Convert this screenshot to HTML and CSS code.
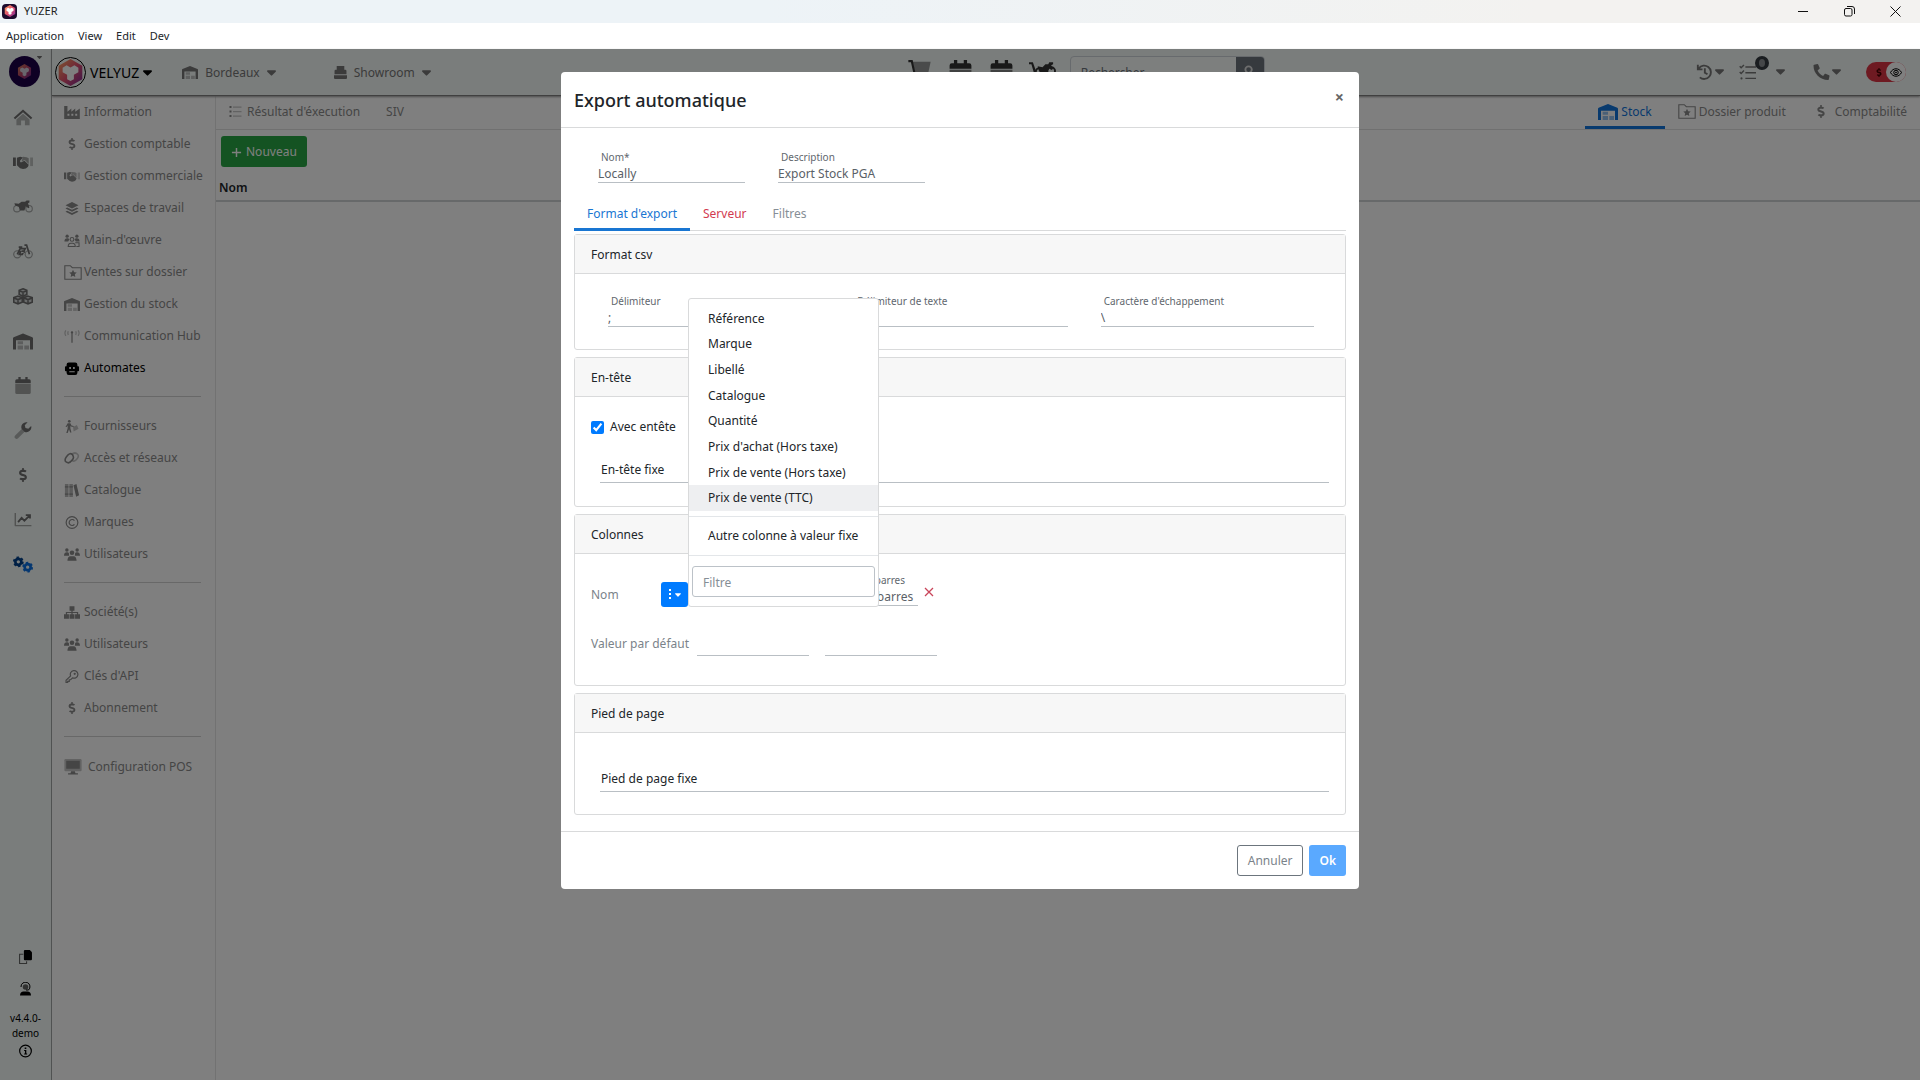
FILE: index.html
```
<!DOCTYPE html>
<html lang="fr">

<head>
    <meta charset="UTF-8">
    <meta name="viewport" content="width=device-width, initial-scale=1.0">
    <title>YUZER</title>
    <link rel="stylesheet" href="styles.css">
</head>

<body>
    <!-- Icon sprite -->
    <svg class="sprite" aria-hidden="true">
        <defs>
            <linearGradient id="brand" x1="0" y1="0" x2="1" y2="1">
                <stop offset="0" stop-color="#ffa860" />
                <stop offset="0.5" stop-color="#e0506e" />
                <stop offset="1" stop-color="#7a2a9a" />
            </linearGradient>
        </defs>
        <symbol id="i-caret" viewBox="0 0 10 6"><path d="M1 0h8c.9 0 1.300 .9.700 1.500L5.700 5.600a1 1 0 0 1-1.400 0L.3 1.500C-.3.900.1 0 1 0z" /></symbol>
        <symbol id="i-hex" viewBox="0 0 24 24">
            <path fill="url(#brand)" d="M12 0l10.500 6v12L12 24 1.500 18V6z" />
            <path fill="#fff" d="M8.500 5.500l3.500 2 3.500-2 3.500 2.200v4l-4 2.300v4L12 19.500 9 18v-4l-4-2.300v-4z" />
        </symbol>
        <symbol id="i-home" viewBox="0 0 24 22">
            <path opacity=".5" d="M12 6l8.500 7.500V21h-6v-6h-5v6h-6v-7.500z" />
            <path d="M12 .5l12 10.700-1.800 2L12 4.200 1.800 13.200 0 11.200z" />
        </symbol>
        <symbol id="i-handshake" viewBox="0 0 28 18">
            <path d="M0 2h4v12H0zM5.500 2.500L10 1l4 1-4.500 5 1.500 2 5-2.500 6 5.500-1 3-3 2.500-4 .5-4-1-4.500-4z" />
            <path d="M14 1l5 .5 3 1.500v8l-5.500-5.500L12 7.500z" opacity=".6" />
            <path opacity=".4" d="M24 2h4v12h-4z" />
        </symbol>
        <symbol id="i-moto" viewBox="0 0 28 17">
            <path fill="none" stroke="currentColor" stroke-width="1.500" opacity=".6" d="M10 11.500a4.500 4.500 0 1 1-9 0 4.500 4.500 0 0 1 9 0zM27 11.500a4.500 4.500 0 1 1-9 0 4.500 4.500 0 0 1 9 0z" />
            <path d="M2 4l6 .5 4-2.500h5L19 0h4v3l-2 1 2 6-1.500 1L18 8l-2 6h-6L8 9 3 7z" />
        </symbol>
        <symbol id="i-bike" viewBox="0 0 28 20">
            <path fill="none" stroke="currentColor" stroke-width="1.600" opacity=".6" d="M11 14a5 5 0 1 1-10 0 5 5 0 0 1 10 0zM27 14a5 5 0 1 1-10 0 5 5 0 0 1 10 0z" />
            <path fill="none" stroke="currentColor" stroke-width="2.400" d="M6 14l4-8h7l-4 8H9l2-5M16 1h3l4 13M8 4h5M12 9l5 2" />
        </symbol>
        <symbol id="i-cubes" viewBox="0 0 26 22">
            <g fill="none" stroke="currentColor" stroke-width="2">
                <path fill="currentColor" fill-opacity=".25" d="M13 1l5 2v5.500l-5 2-5-2V3zM6.500 10.500l5.500 2v6l-5.500 2-5.500-2v-6zM19.500 10.500l5.500 2v6l-5.500 2-5.500-2v-6z" />
                <path d="M8 3.500l5 2 5-2M13 5.500V10M1 13l5.500 2 5.500-2M6.500 15v5M14 13l5.500 2 5.500-2M19.500 15v5" />
            </g>
        </symbol>
        <symbol id="i-warehouse" viewBox="0 0 30 24">
            <path d="M15 0l14 5.500c.6.300 1 .9 1 1.500v17h-4.500V10h-21v14H0V7c0-.6.400-1.200 1-1.500z" />
            <path opacity=".45" d="M7 11.500h8V16H7zM7 18h8v6H7zM17 18h7v6h-7z" />
        </symbol>
        <symbol id="i-calendar" viewBox="0 0 20 22">
            <path d="M4 0h3v3h6V0h3v3h2a2 2 0 0 1 2 2v3H0V5a2 2 0 0 1 2-2h2z" />
            <path opacity=".6" d="M0 9h20v11a2 2 0 0 1-2 2H2a2 2 0 0 1-2-2z" />
        </symbol>
        <symbol id="i-wrench" viewBox="0 0 24 24">
            <path opacity=".5" d="M11 9l4 4L5 23a2.800 2.800 0 0 1-4-4z" />
            <path d="M23.500 5.500l-4 4-4-1-1-4 4-4a7 7 0 0 0-8.500 9l4.500 4.500a7 7 0 0 0 9-8.500z" />
        </symbol>
        <symbol id="i-dollar" viewBox="0 0 288 512"><path d="M209.200 233.400l-108-31.600C88.700 198.200 80 186.500 80 173.500c0-16.300 13.200-29.500 29.500-29.500h66.300c12.200 0 24.200 3.700 34.200 10.500 6.100 4.100 14.300 3.100 19.500-2l34.800-34c7.100-6.900 6.100-18.400-1.800-24.500C238 74.800 207.400 64.100 176 64V16c0-8.800-7.200-16-16-16h-32c-8.800 0-16 7.200-16 16v48h-2.500C45.800 64-5.400 118.700.5 183.600c4.200 46.100 39.400 83.600 83.800 96.600l102.500 30c12.500 3.700 21.200 15.300 21.200 28.300 0 16.300-13.200 29.500-29.500 29.500h-66.300C100 368 88 364.300 78 357.500c-6.100-4.100-14.300-3.100-19.500 2l-34.800 34c-7.100 6.900-6.100 18.400 1.800 24.500 24.500 19.200 55.100 29.900 86.500 30v48c0 8.800 7.200 16 16 16h32c8.800 0 16-7.200 16-16v-48.200c46.600-.9 90.300-28.600 105.700-72.700 21.500-61.600-14.600-124.800-72.500-141.700z" /></symbol>
        <symbol id="i-chart" viewBox="0 0 24 20">
            <path opacity=".6" d="M0 0h2v17h22v2H1a1 1 0 0 1-1-1z" />
            <path fill="none" stroke="currentColor" stroke-width="2.500" d="M5 13l5-6 4 4 7-7M16 3h6v5" />
        </symbol>
        <symbol id="i-cogs" viewBox="0 0 30 24">
            <circle cx="8" cy="8" r="4.500" fill="none" stroke="#00408a" stroke-width="4" />
            <circle cx="8" cy="8" r="6.800" fill="none" stroke="#00408a" stroke-width="2.600" stroke-dasharray="3.600 3.520" />
            <circle cx="22" cy="16" r="4.500" fill="none" stroke="#0a6fe0" stroke-width="4" />
            <circle cx="22" cy="16" r="6.800" fill="none" stroke="#0a6fe0" stroke-width="2.600" stroke-dasharray="3.600 3.520" />
        </symbol>
        <symbol id="i-copy" viewBox="0 0 24 26">
            <path fill="none" stroke="currentColor" stroke-width="2" opacity=".6" d="M8 8H1v17h13v-4" />
            <path d="M11 0h9l4 4v13a2 2 0 0 1-2 2H11a2 2 0 0 1-2-2V2a2 2 0 0 1 2-2z" />
        </symbol>
        <symbol id="i-support" viewBox="0 0 24 28">
            <path fill="none" stroke="currentColor" stroke-width="2" d="M3 10a9 9 0 1 1 15 6h-5" />
            <circle cx="12" cy="10" r="5.500" opacity=".6" />
            <path d="M1 27c0-5 3-8 7-8h8c4 0 7 3 7 8z" />
        </symbol>
        <symbol id="i-info" viewBox="0 0 24 24">
            <circle cx="12" cy="12" r="10.800" fill="none" stroke="currentColor" stroke-width="2.200" />
            <path d="M10.500 5.500h3v3h-3zM9.500 10h4v6.500H15V18.500H9.500v-2H11V12H9.500z" />
        </symbol>
        <symbol id="i-factory" viewBox="0 0 24 20"><path d="M0 0h5v9l6-5v5l6-5v5l7-5v16H0zM5 12v3h3v-3zm6 0v3h3v-3zm6 0v3h3v-3z" fill-rule="evenodd" /></symbol>
        <symbol id="i-layers" viewBox="0 0 24 24"><path d="M12 0l12 6-12 6L0 6zM3 10l9 4.500L21 10l3 1.800-12 6-12-6zM3 16l9 4.500L21 16l3 1.800L12 24 0 17.800z" /></symbol>
        <symbol id="i-crew" viewBox="0 0 28 24">
            <circle cx="5" cy="4" r="3" /><circle cx="23" cy="4" r="3" />
            <path d="M0 14c0-4 2-6 5-6 2 0 3 .5 4 2l-2 4zM28 14c0-4-2-6-5-6-2 0-3 .5-4 2l2 4z" />
            <g fill="none" stroke="currentColor" stroke-width="2"><circle cx="14" cy="10" r="3.500" /><path d="M7 23c0-4 2-6 5-6h3c3 0 5 2 5 6zM20 16h7v7h-5" /></g>
        </symbol>
        <symbol id="i-folder" viewBox="0 0 26 22">
            <path fill="none" stroke="currentColor" stroke-width="1.600" d="M1 1h8l3 3h13v17H1z" />
            <path d="M13 7l1.700 3.500 3.800.5-2.800 2.700.7 3.800L13 15.700l-3.400 1.800.7-3.800L7.500 11l3.800-.5z" />
        </symbol>
        <symbol id="i-antenna" viewBox="0 0 26 20">
            <path d="M11 3.500a2 2 0 1 1 4 0 2 2 0 0 1-1 1.700V20h-2V5.200a2 2 0 0 1-1-1.700z" />
            <path fill="none" stroke="currentColor" stroke-width="2" opacity=".5" d="M3 0c-2 3-2 6 0 9M23 0c2 3 2 6 0 9M7 1.500c-1 2-1 4 0 6M19 1.500c1 2 1 4 0 6" />
        </symbol>
        <symbol id="i-robot" viewBox="0 0 26 24"><path fill-rule="evenodd" d="M7 1h12a4 4 0 0 1 4 4v3h1.500A1.500 1.500 0 0 1 26 9.500v6a1.500 1.500 0 0 1-1.500 1.500H23v3a4 4 0 0 1-4 4H7a4 4 0 0 1-4-4v-3H1.500A1.500 1.500 0 0 1 0 15.500v-6A1.500 1.500 0 0 1 1.500 8H3V5a4 4 0 0 1 4-4zM8 9v4h3V9zm7 0v4h3V9zM8 17v2h10v-2z" /></symbol>
        <symbol id="i-carry" viewBox="0 0 24 24">
            <circle cx="7" cy="2.500" r="2.500" /><path d="M4 6h5l2 4 4 1v2l-5-1-1-2v5l2 8H8.500L6.500 17 4 24H1.500L4 15v-5l-2 3H0z" />
            <path opacity=".5" d="M14 13l7-4 3 7-9 5z" />
        </symbol>
        <symbol id="i-link" viewBox="0 0 26 20">
            <g fill="none" stroke="currentColor" stroke-width="2.600"><path d="M14 4c-3-4-7-1-10 3s-3 7 0 9 6 1 9-3 3-5 1-9z" /><path opacity=".5" d="M12 4c3-3 7-4 10-1s1 6-2 9-5 3-7 1" /></g>
        </symbol>
        <symbol id="i-books" viewBox="0 0 24 22">
            <path opacity=".6" d="M0 0h6v22H0zM7.500 0h6v22h-6z" /><path d="M14.500 2l5-2L24 19l-5 2.500z" /><path d="M0 4h6v2H0zM0 16h6v2H0zM7.500 4h6v2h-6zM7.500 16h6v2h-6z" />
        </symbol>
        <symbol id="i-copyright" viewBox="0 0 24 24"><g fill="none" stroke="currentColor" stroke-width="2.200"><circle cx="12" cy="12" r="10.800" /><path d="M16.500 8.500a5.500 5.500 0 1 0 0 7" /></g></symbol>
        <symbol id="i-users" viewBox="0 0 28 22">
            <circle cx="5" cy="3" r="3" /><circle cx="23" cy="3" r="3" /><circle cx="14" cy="8" r="4" />
            <path d="M0 13c0-4 2-6 5-6 1.500 0 3 .5 3.500 1.500L9 13zM28 13c0-4-2-6-5-6-1.500 0-3 .5-3.500 1.500L19 13zM6 22c0-5 2-8 5-8h6c3 0 5 3 5 8z" />
        </symbol>
        <symbol id="i-sitemap" viewBox="0 0 26 20"><path d="M9 0h8v7h-3v2h9v4h3v7h-8v-7h3v-2h-7v2h3v7H9v-7h3v-2H5v2h3v7H0v-7h3V9h9V7H9z" /></symbol>
        <symbol id="i-key" viewBox="0 0 24 24"><g fill="none" stroke="currentColor" stroke-width="2.200"><path d="M9.500 11A7 7 0 1 1 13 14.500L9.500 18H7v3H4v2H1v-4z" /><circle cx="17" cy="7" r="1" /></g></symbol>
        <symbol id="i-desktop" viewBox="0 0 28 26">
            <path opacity=".5" d="M2 0h24a2 2 0 0 1 2 2v16a2 2 0 0 1-2 2H2a2 2 0 0 1-2-2V2a2 2 0 0 1 2-2z" />
            <path d="M3 3h22v13H3zM11 20h6l1 3h4v2H6v-2h4z" />
        </symbol>
        <symbol id="i-list" viewBox="0 0 24 22">
            <path d="M0 0h4v4H0zM0 9h4v4H0zM0 18h4v4H0z" /><path opacity=".5" d="M7 1h17v2.500H7zM7 10h17v2.500H7zM7 19h17v2.500H7z" />
        </symbol>
        <symbol id="i-register" viewBox="0 0 24 24"><path d="M5 0h14v7h2a2 2 0 0 1 2 2v6H1V9a2 2 0 0 1 2-2h2zM0 17h24v5a2 2 0 0 1-2 2H2a2 2 0 0 1-2-2z" /></symbol>
        <symbol id="i-cart" viewBox="0 0 26 28">
            <path d="M0 0h5l4 18h14v2.500H7L3 2.500H0z" /><path opacity=".5" d="M5 2h21l-3 14H8z" /><circle cx="10" cy="25" r="2.500" /><circle cx="20" cy="25" r="2.500" />
        </symbol>
        <symbol id="i-motocart" viewBox="0 0 28 20">
            <path d="M0 0h4l5 14h-3L2.500 2H0zM9 4l5 1 3-3h3l1-2h4v2l-2 1 2 4-2 1-2-2-3 6h-6l-2-4z" />
            <g fill="none" stroke="currentColor" stroke-width="2"><circle cx="11" cy="10" r="4" /><circle cx="23" cy="9" r="4" /></g>
        </symbol>
        <symbol id="i-search" viewBox="0 0 24 24"><path fill="none" stroke="currentColor" stroke-width="4" d="M17 10a7 7 0 1 1-14 0 7 7 0 0 1 14 0zM15 15l8 8" /></symbol>
        <symbol id="i-history" viewBox="0 0 24 24"><path fill="none" stroke="currentColor" stroke-width="2.800" d="M3.500 6.500A10 10 0 1 1 5 20M12.500 6.500V13l4 2.500M2 1v7h7" /></symbol>
        <symbol id="i-tasks" viewBox="0 0 24 22">
            <path fill="none" stroke="currentColor" stroke-width="2" d="M1 3l2 2 4-4M1 11l2 2 4-4M9 4h15M9 12h15M9 20h15" /><circle cx="3.500" cy="20" r="1.500" />
        </symbol>
        <symbol id="i-phone" viewBox="0 0 512 512"><path transform="translate(512 0) scale(-1 1)" d="M493.400 24.600l-104-24c-11.300-2.600-22.900 3.300-27.500 13.900l-48 112c-4.200 9.800-1.400 21.300 6.900 28l60.600 49.600c-36 76.700-98.900 140.500-177.200 177.200l-49.600-60.600c-6.800-8.300-18.200-11.100-28-6.900l-112 48C3.900 366.500-2 378.100.6 389.400l24 104C27.100 504.200 36.700 512 48 512c256.100 0 464-207.500 464-464 0-11.200-7.700-20.900-18.600-23.400z" /></symbol>
        <symbol id="i-eye" viewBox="0 0 24 18"><g fill="none" stroke="currentColor" stroke-width="2"><path d="M1 9c5-10 17-10 22 0-5 10-17 10-22 0z" /><circle cx="12" cy="9" r="4.500" /><circle cx="12" cy="9" r="1" /></g></symbol>
        <symbol id="i-plus" viewBox="0 0 12 12"><path d="M5.200 1h1.600v4.200H11v1.600H6.800V11H5.200V6.800H1V5.200h4.200z" /></symbol>
        <symbol id="i-cross" viewBox="0 0 10 10"><path fill="none" stroke="currentColor" stroke-width="1.300" d="M1 1l8 8M9 1L1 9" /></symbol>
        <symbol id="i-dots" viewBox="0 0 3 11"><path d="M0 0h2v2H0zM0 4h2v2H0zM0 8h2v2H0z" /></symbol>
    </svg>

    <!-- Window chrome -->
    <div class="titlebar">
        <span class="titlebar-logo"><svg><use href="#i-hex" /></svg></span>
        <span>YUZER</span>
        <div class="window-controls">
            <button type="button" aria-label="Réduire"><svg viewBox="0 0 11 11"><path d="M0 5.500h10" /></svg></button>
            <button type="button" aria-label="Restaurer"><svg viewBox="0 0 11 11"><path d="M.5 4a1.500 1.500 0 0 1 1.500-1.500h4.500A1.500 1.500 0 0 1 8 4v4.500A1.500 1.500 0 0 1 6.500 10H2A1.500 1.500 0 0 1 .5 8.500zM3 .5h5A2.500 2.500 0 0 1 10.500 3v5" /></svg></button>
            <button type="button" aria-label="Fermer"><svg viewBox="0 0 11 11"><path d="M.5.500l10 10M10.500.500l-10 10" /></svg></button>
        </div>
    </div>
    <nav class="menubar">
        <a href="#">Application</a>
        <a href="#">View</a>
        <a href="#">Edit</a>
        <a href="#">Dev</a>
    </nav>

    <div class="app">
        <!-- Icon rail -->
        <aside class="rail">
            <div class="rail-avatar">
                <span class="avatar"><svg><use href="#i-hex" /></svg></span>
                <svg class="avatar-caret"><use href="#i-caret" /></svg>
            </div>
            <nav class="rail-nav">
                <a href="#" aria-label="Accueil"><svg><use href="#i-home" /></svg></a>
                <a href="#" aria-label="Commerce"><svg><use href="#i-handshake" /></svg></a>
                <a href="#" aria-label="Motos"><svg><use href="#i-moto" /></svg></a>
                <a href="#" aria-label="Vélos"><svg><use href="#i-bike" /></svg></a>
                <a href="#" aria-label="Produits"><svg><use href="#i-cubes" /></svg></a>
                <a href="#" aria-label="Stock"><svg><use href="#i-warehouse" /></svg></a>
                <a href="#" aria-label="Agenda"><svg><use href="#i-calendar" /></svg></a>
                <a href="#" aria-label="Atelier"><svg><use href="#i-wrench" /></svg></a>
                <a href="#" aria-label="Comptabilité"><svg class="small"><use href="#i-dollar" /></svg></a>
                <a href="#" aria-label="Statistiques"><svg class="small"><use href="#i-chart" /></svg></a>
                <a href="#" aria-label="Paramètres"><svg><use href="#i-cogs" /></svg></a>
            </nav>
            <div class="rail-footer">
                <svg><use href="#i-copy" /></svg>
                <svg class="support"><use href="#i-support" /></svg>
                <span>v4.4.0-<br>demo</span>
                <svg><use href="#i-info" /></svg>
            </div>
        </aside>

        <div class="main">
            <header class="topbar">
                <div class="topbar-left">
                    <button type="button" class="company"><span class="company-logo"><svg><use href="#i-hex" /></svg></span>VELYUZ <svg class="caret"><use href="#i-caret" /></svg></button>
                    <button type="button" class="site"><svg class="icon"><use href="#i-warehouse" /></svg>Bordeaux <svg class="caret"><use href="#i-caret" /></svg></button>
                    <button type="button" class="room"><svg class="icon"><use href="#i-register" /></svg>Showroom <svg class="caret"><use href="#i-caret" /></svg></button>
                </div>
                <div class="topbar-center">
                    <svg><use href="#i-cart" /></svg>
                    <svg><use href="#i-calendar" /></svg>
                    <svg><use href="#i-calendar" /></svg>
                    <svg><use href="#i-motocart" /></svg>
                    <form class="search">
                        <input type="search" placeholder="Rechercher" aria-label="Rechercher">
                        <button type="button" aria-label="Lancer la recherche"><svg><use href="#i-search" /></svg></button>
                    </form>
                </div>
                <div class="topbar-right">
                    <button type="button" aria-label="Historique"><svg class="icon"><use href="#i-history" /></svg><svg class="caret"><use href="#i-caret" /></svg></button>
                    <button type="button" class="tasks" aria-label="Tâches"><svg class="icon"><use href="#i-tasks" /></svg><span class="badge"></span><svg class="caret"><use href="#i-caret" /></svg></button>
                    <button type="button" class="calls" aria-label="Appels"><svg class="icon"><use href="#i-phone" /></svg><svg class="caret"><use href="#i-caret" /></svg></button>
                    <button type="button" class="switch" aria-label="Afficher les montants"><svg class="switch-dollar"><use href="#i-dollar" /></svg><span class="knob"><svg><use href="#i-eye" /></svg></span></button>
                </div>
            </header>

            <div class="workspace">
                <nav class="submenu">
                    <a href="#"><svg><use href="#i-factory" /></svg>Information</a>
                    <a href="#"><svg class="thin"><use href="#i-dollar" /></svg>Gestion comptable</a>
                    <a href="#"><svg><use href="#i-handshake" /></svg>Gestion commerciale</a>
                    <a href="#"><svg><use href="#i-layers" /></svg>Espaces de travail</a>
                    <a href="#"><svg><use href="#i-crew" /></svg>Main-d'œuvre</a>
                    <a href="#"><svg class="wide"><use href="#i-folder" /></svg>Ventes sur dossier</a>
                    <a href="#"><svg><use href="#i-warehouse" /></svg>Gestion du stock</a>
                    <a href="#"><svg><use href="#i-antenna" /></svg>Communication Hub</a>
                    <a href="#" class="active"><svg><use href="#i-robot" /></svg>Automates</a>
                    <hr>
                    <a href="#"><svg><use href="#i-carry" /></svg>Fournisseurs</a>
                    <a href="#"><svg><use href="#i-link" /></svg>Accès et réseaux</a>
                    <a href="#"><svg><use href="#i-books" /></svg>Catalogue</a>
                    <a href="#"><svg><use href="#i-copyright" /></svg>Marques</a>
                    <a href="#"><svg><use href="#i-users" /></svg>Utilisateurs</a>
                    <hr>
                    <a href="#"><svg><use href="#i-sitemap" /></svg>Société(s)</a>
                    <a href="#"><svg><use href="#i-users" /></svg>Utilisateurs</a>
                    <a href="#"><svg><use href="#i-key" /></svg>Clés d'API</a>
                    <a href="#"><svg class="thin"><use href="#i-dollar" /></svg>Abonnement</a>
                    <hr>
                    <a href="#" class="pos"><svg><use href="#i-desktop" /></svg>Configuration POS</a>
                </nav>

                <section class="content">
                    <nav class="content-tabs">
                        <a href="#"><svg class="list-icon"><use href="#i-list" /></svg>Résultat d'éxecution</a>
                        <a href="#">SIV</a>
                        <a href="#" class="first-right active"><svg class="stock-icon"><use href="#i-warehouse" /></svg>Stock</a>
                        <a href="#"><svg><use href="#i-folder" /></svg>Dossier produit</a>
                        <a href="#"><svg class="dollar-icon"><use href="#i-dollar" /></svg>Comptabilité</a>
                    </nav>
                    <button type="button" class="btn btn-success"><svg><use href="#i-plus" /></svg>Nouveau</button>
                    <table class="list">
                        <thead>
                            <tr><th>Nom</th></tr>
                        </thead>
                    </table>
                </section>
            </div>
        </div>

        <!-- Export modal -->
        <div class="backdrop">
            <div class="modal" role="dialog" aria-labelledby="modalTitle">
                <div class="modal-header">
                    <h1 id="modalTitle">Export automatique</h1>
                    <button type="button" class="close" aria-label="Fermer">×</button>
                </div>
                <div class="modal-body">
                    <div class="identity">
                        <div class="field">
                            <label for="nom">Nom*</label>
                            <input type="text" id="nom" value="Locally">
                        </div>
                        <div class="field">
                            <label for="description">Description</label>
                            <input type="text" id="description" value="Export Stock PGA">
                        </div>
                    </div>

                    <nav class="tabs">
                        <a href="#" class="active">Format d'export</a>
                        <a href="#" class="invalid">Serveur</a>
                        <a href="#">Filtres</a>
                    </nav>

                    <div class="card">
                        <h2>Format csv</h2>
                        <div class="card-body csv">
                            <div class="field">
                                <label for="delimiteur">Délimiteur</label>
                                <input type="text" id="delimiteur" value=";">
                            </div>
                            <div class="field">
                                <label for="texte">Délimiteur de texte</label>
                                <input type="text" id="texte">
                            </div>
                            <div class="field">
                                <label for="echappement">Caractère d'échappement</label>
                                <input type="text" id="echappement" value="\">
                            </div>
                        </div>
                    </div>

                    <div class="card">
                        <h2>En-tête</h2>
                        <div class="card-body entete">
                            <label class="check"><input type="checkbox" checked>Avec entête</label>
                            <input type="text" class="fixed-text" placeholder="En-tête fixe" aria-label="En-tête fixe">
                        </div>
                    </div>

                    <div class="card">
                        <h2>Colonnes</h2>
                        <div class="card-body colonnes">
                            <div class="row">
                                <div class="row-head">
                                    <span>Nom</span>
                                    <button type="button" class="menu-toggle" aria-label="Choisir une colonne"><svg class="dots"><use href="#i-dots" /></svg><svg class="toggle-caret"><use href="#i-caret" /></svg></button>
                                    <div class="dropdown">
                                        <div class="dropdown-list">
                                            <button type="button">Référence</button>
                                            <button type="button">Marque</button>
                                            <button type="button">Libellé</button>
                                            <button type="button">Catalogue</button>
                                            <button type="button">Quantité</button>
                                            <button type="button">Prix d'achat (Hors taxe)</button>
                                            <button type="button">Prix de vente (Hors taxe)</button>
                                            <button type="button" class="hover">Prix de vente (TTC)</button>
                                        </div>
                                        <div class="dropdown-other">
                                            <button type="button">Autre colonne à valeur fixe</button>
                                        </div>
                                        <input type="text" placeholder="Filtre" aria-label="Filtre">
                                    </div>
                                </div>
                                <div class="field column-name">
                                    <label for="colonne">Nom du code barres</label>
                                    <input type="text" id="colonne" value="Nom code à barres">
                                </div>
                                <button type="button" class="remove" aria-label="Supprimer"><svg><use href="#i-cross" /></svg></button>
                            </div>
                            <div class="row defaults">
                                <div class="row-head"><span>Valeur par défaut</span></div>
                                <input type="text" aria-label="Valeur par défaut 1">
                                <input type="text" aria-label="Valeur par défaut 2">
                            </div>
                        </div>
                    </div>

                    <div class="card">
                        <h2>Pied de page</h2>
                        <div class="card-body pied">
                            <input type="text" class="fixed-text" placeholder="Pied de page fixe" aria-label="Pied de page fixe">
                        </div>
                    </div>
                </div>
                <div class="modal-footer">
                    <button type="button" class="btn btn-outline">Annuler</button>
                    <button type="button" class="btn btn-primary">Ok</button>
                </div>
            </div>
        </div>
    </div>
</body>

</html>
```
FILE: styles.css
```
:root {
    --text: #212529;
    --muted: #8a8a8a;
    --line: #d9dadb;
    --underline: #b9bfc4;
    --primary: #007bff;
    --rail-bg: #f4faf8;
}

* {
    box-sizing: border-box;
}

body {
    margin: 0;
    height: 100vh;
    display: flex;
    flex-direction: column;
    font-family: "Noto Sans", "Open Sans", sans-serif;
    font-size: 12px;
    line-height: 18px;
    color: var(--text);
    background: #fff;
}

button,
input {
    font: inherit;
    color: inherit;
    margin: 0;
    padding: 0;
    border: 0;
    background: none;
    border-radius: 0;
    outline: none;
}

button {
    cursor: pointer;
}

a {
    color: inherit;
    text-decoration: none;
}

svg {
    fill: currentColor;
    flex: none;
}

.sprite {
    position: absolute;
    width: 0;
    height: 0;
}

/* Window chrome */
.titlebar {
    display: flex;
    align-items: center;
    height: 23px;
    padding: 0 2px 1px;
    gap: 7px;
    background: linear-gradient(90deg, #edf3f7 0%, #edf3f7 40%, #f3f2f0 80%);
    color: #222;
    font-size: 11px;
}

.titlebar-logo {
    display: flex;
    align-items: center;
    justify-content: center;
    width: 15px;
    height: 15px;
    border-radius: 4px;
    background: #1d0b2e;
}

.titlebar-logo svg {
    width: 12px;
    height: 12px;
}

.window-controls {
    display: flex;
    margin-left: auto;
}

.window-controls button {
    width: 46px;
    display: flex;
    align-items: center;
    justify-content: center;
}

.window-controls svg {
    width: 11px;
    height: 11px;
    fill: none;
    stroke: #111;
}

.menubar {
    display: flex;
    align-items: center;
    gap: 14px;
    height: 26px;
    padding-left: 6px;
    font-size: 11px;
}

/* App shell */
.app {
    position: relative;
    flex: 1;
    display: flex;
    min-height: 0;
}

.rail {
    width: 52px;
    display: flex;
    flex-direction: column;
    background: var(--rail-bg);
    border-right: 1px solid #a0a5a4;
    color: #6e6e6e;
}

.rail-avatar {
    display: flex;
    height: 46px;
    padding: 7px 0 0 9px;
}

.avatar {
    display: flex;
    align-items: center;
    justify-content: center;
    width: 31px;
    height: 31px;
    border-radius: 50%;
    background: #1c0048;
}

.avatar svg {
    width: 15px;
    height: 15px;
    opacity: .8;
}

.avatar-caret {
    width: 5px;
    height: 3px;
    margin-left: -3px;
}

.rail-nav {
    display: flex;
    flex-direction: column;
    height: 492px;
}

.rail-nav a {
    flex: 1;
    display: flex;
    align-items: center;
    justify-content: center;
    padding-right: 5px;
}

.rail-nav svg {
    width: 20px;
    height: 17px;
}

.rail-nav .small {
    height: 14px;
}

.rail-footer {
    margin-top: auto;
    display: flex;
    flex-direction: column;
    align-items: center;
    padding-bottom: 22px;
    color: #000;
    font-size: 10px;
    line-height: 15px;
    text-align: center;
}

.rail-footer svg {
    width: 13px;
    height: 14px;
    margin-bottom: 18px;
}

.rail-footer .support {
    margin-bottom: 15px;
}

.rail-footer span {
    margin-bottom: 3px;
}

.rail-footer svg:last-child {
    margin-bottom: 0;
}

.main {
    flex: 1;
    min-width: 0;
    display: flex;
    flex-direction: column;
}

/* Top bar */
.topbar {
    display: grid;
    grid-template-columns: 45.7% auto 1fr;
    height: 47px;
    background: var(--rail-bg);
    border-bottom: 1px solid #808080;
    color: #777;
    box-shadow: 0 1px 2px #999;
    z-index: 1;
}

.topbar-left,
.topbar-right,
.topbar-right button {
    display: flex;
    align-items: center;
}

.topbar-left {
    padding: 1px 0 0 3px;
}

.topbar-left button {
    display: flex;
    align-items: center;
    gap: 7px;
}

.caret {
    width: 9px;
    height: 6px;
}

.company {
    color: #000;
    font-size: 14px;
}

.topbar-left .company {
    gap: 4px;
}

.company-logo {
    display: flex;
    align-items: center;
    justify-content: center;
    width: 31px;
    height: 31px;
    border: 1px solid #000;
    border-radius: 50%;
}

.company-logo svg {
    width: 27px;
    height: 27px;
}

.site {
    margin-left: 30px;
}

.site .icon {
    width: 16px;
    height: 13px;
}

.room {
    margin-left: 58px;
}

.room .icon {
    width: 13px;
    height: 13px;
}

.topbar-center {
    display: flex;
    align-items: flex-start;
    padding-top: 7px;
    color: #333;
}

.topbar-center > svg {
    width: 27px;
    height: 24px;
    margin: 4px 14px 0 0;
}

.search {
    display: flex;
    height: 31px;
    width: 195px;
    border: 1px solid #ced4da;
    border-radius: 4px;
    background: #fbfffd;
    overflow: hidden;
}

.search input {
    flex: 1;
    min-width: 0;
    padding: 2px 10px 0;
}

.search input::placeholder {
    color: #6c757d;
}

.search button {
    width: 28px;
    background: #6c757d;
    color: #ddd;
}

.search svg {
    width: 11px;
    height: 11px;
}

.topbar-right {
    justify-content: flex-end;
    padding-right: 14px;
}

.topbar-right button {
    gap: 2px;
}

.topbar-right .icon {
    width: 17px;
    height: 16px;
}

.topbar-right .tasks {
    position: relative;
    gap: 20px;
    margin-left: 15px;
}

.badge {
    position: absolute;
    left: 16px;
    top: -8px;
    width: 14px;
    height: 14px;
    border: 3px solid #343a40;
    border-width: 3px 4px;
    border-radius: 7px;
    background: #8a8f92;
}

.topbar-right .calls {
    margin-left: 28px;
}

.topbar-right .switch {
    position: relative;
    width: 40px;
    height: 20px;
    margin-left: 25px;
    padding-left: 10px;
    border-radius: 10px;
    background: #dc3545;
    color: #400;
}

.switch-dollar {
    width: 6px;
    height: 9px;
}

.knob {
    position: absolute;
    right: 0;
    top: 0;
    width: 20px;
    height: 20px;
    border-radius: 50%;
    background: #fff;
    display: flex;
    align-items: center;
    justify-content: center;
    color: #000;
}

.knob svg {
    width: 12px;
    height: 9px;
}

/* Sub menu */
.workspace {
    flex: 1;
    display: flex;
    min-height: 0;
}

.submenu {
    width: 164px;
    padding: 0 14px 0 12px;
    border-right: 1px solid #e4e4e4;
    color: var(--muted);
}

.submenu a {
    display: flex;
    align-items: center;
    gap: 4px;
    height: 32px;
    white-space: nowrap;
}

.submenu svg {
    width: 16px;
    height: 13px;
}

.submenu .thin {
    height: 12px;
}

.submenu .wide {
    width: 18px;
    height: 15px;
    margin-right: -2px;
}

.submenu hr {
    height: 1px;
    margin: 12px 0 13px;
    border: 0;
    background: #d0d0d0;
}

.submenu .active {
    color: #000;
}

.submenu .pos {
    gap: 6px;
    padding-top: 1px;
}

.submenu .pos svg {
    width: 18px;
    height: 16px;
}

.content {
    flex: 1;
    min-width: 0;
}

.content-tabs {
    display: flex;
    height: 34px;
    border-bottom: 1px solid #e0e0e0;
    color: var(--muted);
}

.content-tabs a {
    display: flex;
    align-items: center;
    gap: 3px;
    padding: 0 13px 2px;
}

.content-tabs svg {
    width: 18px;
    height: 15px;
}

.content-tabs .list-icon {
    width: 13px;
    height: 11px;
    margin-right: 2px;
}

.content-tabs .stock-icon {
    width: 20px;
    height: 16px;
}

.content-tabs .dollar-icon {
    height: 13px;
    margin-right: 2px;
}

.content-tabs .first-right {
    margin-left: auto;
}

.content-tabs .active {
    color: #1074dc;
    border-bottom: 3px solid #1074dc;
    padding: 1px 13px 0;
}

.btn {
    display: inline-flex;
    align-items: center;
    justify-content: center;
    height: 31px;
    padding: 1px 10px 0;
    border-radius: 3px;
}

.btn-success {
    margin: 6px 0 0 5px;
    gap: 4px;
    background: #28a745;
    color: #fff;
}

.btn-success svg {
    width: 11px;
    height: 11px;
}

.list {
    width: 100%;
    margin-top: 8px;
    border-collapse: collapse;
}

.list th {
    height: 26px;
    padding: 0 3px;
    text-align: left;
    font-weight: 600;
    border-bottom: 2px solid #cfd2d5;
}

/* Modal */
.backdrop {
    position: absolute;
    inset: 0;
    z-index: 10;
    display: flex;
    align-items: flex-start;
    justify-content: center;
    padding-top: 23px;
    background: rgba(0, 0, 0, .5);
}

.modal {
    width: 798px;
    max-width: 100%;
    background: #fff;
    border-radius: 4px;
}

.modal-header {
    display: flex;
    align-items: center;
    justify-content: space-between;
    height: 56px;
    padding: 0 13px;
    border-bottom: 1px solid var(--line);
}

.modal-header h1 {
    margin: 0;
    font-size: 18px;
    line-height: 26px;
    font-weight: 500;
}

.close {
    padding: 0 2px 6px;
    font-size: 16px;
    font-weight: 700;
    color: #666;
}

.modal-body {
    padding: 22px 13px 16px;
}

.field {
    display: flex;
    flex-direction: column;
}

.field label {
    padding-left: 3px;
    font-size: 10px;
    line-height: 14px;
    color: #5f676e;
    white-space: nowrap;
}

.field input {
    width: 100%;
    height: 19px;
    border-bottom: 1px solid var(--underline);
    color: #5a6167;
}

.identity {
    display: flex;
    gap: 33px;
    padding-left: 24px;
}

.identity .field {
    width: 147px;
}

.tabs {
    display: flex;
    height: 36px;
    margin: 12px 0 3px;
    border-bottom: 1px solid var(--line);
    color: #868e96;
}

.tabs a {
    padding: 10px 13px 0;
}

.tabs .active {
    height: 36px;
    color: #1976d2;
    border-bottom: 3px solid #1976d2;
}

.tabs .invalid {
    color: #d23a50;
}

.card {
    border: 1px solid var(--line);
    border-radius: 3px;
}

.card + .card {
    margin-top: 7px;
}

.card h2 {
    margin: 0;
    padding: 11px 16px 9px;
    font-size: 12px;
    line-height: 18px;
    font-weight: 400;
    background: #f7f7f7;
    border-bottom: 1px solid var(--line);
}

.csv {
    display: grid;
    grid-template-columns: repeat(3, 1fr);
    gap: 33px;
    padding: 20px 31px 22px 33px;
}

.entete {
    padding: 21px 16px 23px;
}

.check {
    display: flex;
    align-items: center;
    gap: 6px;
    height: 18px;
    margin-bottom: 24px;
}

.check input {
    width: 13px;
    height: 13px;
    accent-color: var(--primary);
}

.fixed-text {
    display: block;
    width: calc(100% - 9px);
    height: 23px;
    margin-left: 9px;
    padding: 0 1px 4px;
    border-bottom: 1px solid var(--underline);
}

.fixed-text::placeholder {
    color: var(--text);
}

.colonnes {
    padding: 19px 16px 29px;
    color: #7b838a;
}

.row {
    display: flex;
    align-items: flex-end;
    height: 33px;
    margin-bottom: 26px;
}

.row-head {
    position: relative;
    display: flex;
    align-items: center;
    justify-content: space-between;
    width: 97px;
    margin-bottom: -1px;
    white-space: nowrap;
}

.menu-toggle {
    display: flex;
    align-items: center;
    justify-content: center;
    gap: 3px;
    width: 27px;
    height: 25px;
    border-radius: 3px;
    background: var(--primary);
    color: #fff;
}

.dots {
    width: 3px;
    height: 11px;
}

.toggle-caret {
    width: 6px;
    height: 4px;
}

.column-name {
    width: 112px;
    margin-left: 118px;
}

.remove {
    display: flex;
    align-items: center;
    height: 28px;
    margin-left: 6px;
    color: #c9455a;
}

.remove svg {
    width: 10px;
    height: 10px;
}

.defaults {
    height: 24px;
    margin-bottom: 0;
}

.defaults .row-head {
    align-self: center;
    margin: 0 9px 0 0;
}

.defaults input {
    width: 112px;
    height: 18px;
    margin-right: 16px;
    border-bottom: 1px solid var(--underline);
}

.pied {
    padding: 36px 16px 22px;
}

/* Column picker */
.dropdown {
    position: absolute;
    left: 100%;
    bottom: 0;
    z-index: 5;
    width: 191px;
    padding: 7px 0 9px;
    background: #fff;
    border: 1px solid var(--line);
    border-radius: 3px;
    color: var(--text);
}

.dropdown button {
    display: block;
    width: 100%;
    padding: 0 19px;
    text-align: left;
    white-space: nowrap;
}

.dropdown-list {
    display: grid;
    grid-auto-rows: 1fr;
    height: 205px;
}

.dropdown .hover {
    background: #eeeff1;
}

.dropdown-other {
    margin: 5px 0 10px;
    padding: 10px 0;
    border: 1px solid #e3e6e9;
    border-width: 1px 0;
}

.dropdown input {
    display: block;
    width: calc(100% - 6px);
    height: 31px;
    margin: 0 3px;
    padding: 1px 10px 0;
    border: 1px solid #bcc2c8;
    border-radius: 3px;
}

.dropdown input::placeholder {
    color: #868e96;
}

.modal-footer {
    display: flex;
    justify-content: flex-end;
    gap: 6px;
    padding: 13px;
    border-top: 1px solid var(--line);
}

.btn-outline {
    border: 1px solid #6c757d;
    color: #7b838a;
}

.btn-primary {
    background: #5aa9ff;
    color: #fff;
    font-weight: 600;
}
```
